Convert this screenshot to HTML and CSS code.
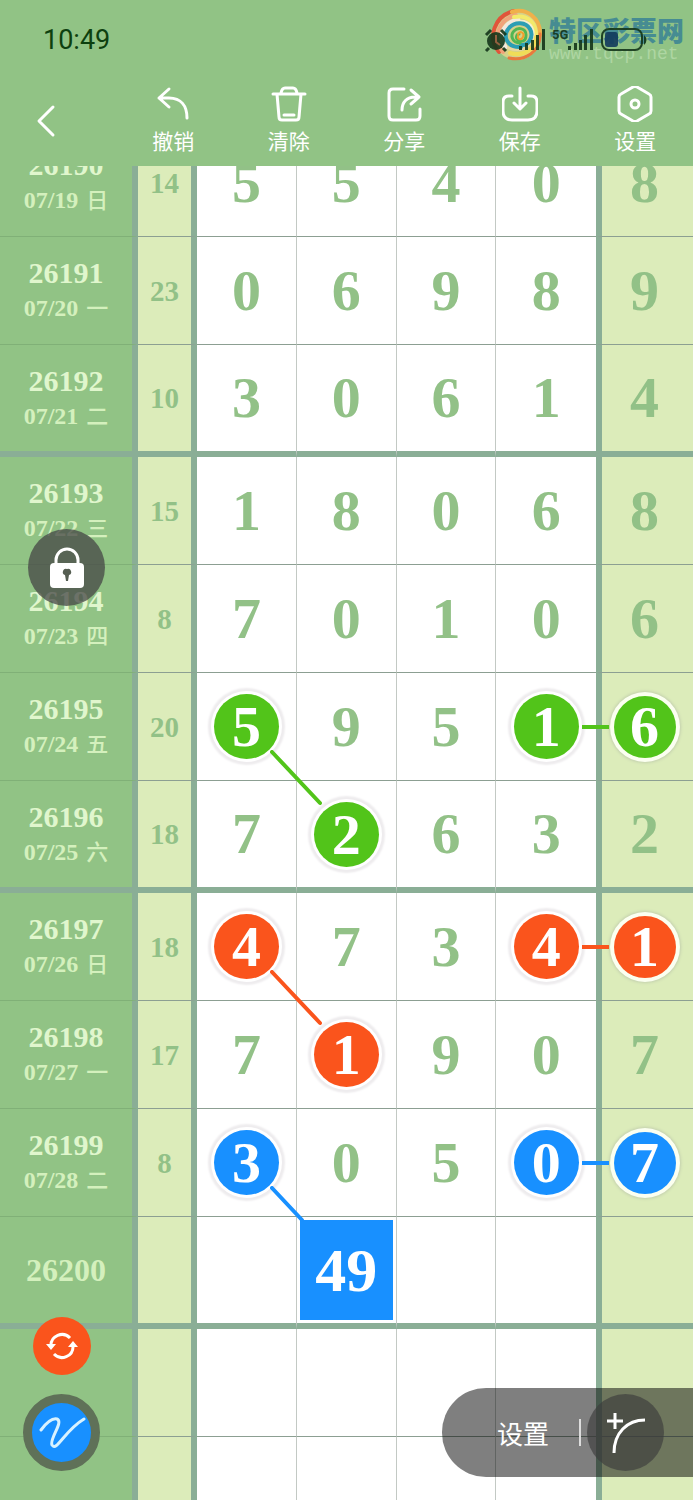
FILE: index.html
```html
<!DOCTYPE html>
<html lang="zh-CN">
<head>
    <meta charset="UTF-8">
    <meta name="viewport" content="width=device-width, initial-scale=1.0">
    <title>走势图</title>
    <link rel="stylesheet" href="styles.css">
</head>
<body>
<div class="app">
    <header>
        <div class="status-bar">
            <span class="clock">10:49</span>
            <div class="watermark">
                <svg viewBox="0 0 54 54" width="54" height="54" fill="none" stroke-linecap="round">
                    <ellipse cx="27" cy="27" rx="24" ry="25" fill="#e6d58c" opacity="0.8"/>
                    <path d="M9 44C-3 30 4 8 24 3" stroke="#e0553a" stroke-width="4"/>
                    <path d="M13 44C2 31 8 12 26 7" stroke="#f0a37a" stroke-width="4"/>
                    <path d="M15 39C8 29 13 15 28 12" stroke="#f3e8dc" stroke-width="5"/>
                    <path d="M22 4C36-1 51 10 50 27" stroke="#f0b04a" stroke-width="4"/>
                    <path d="M24 9C38 6 47 15 46 30" stroke="#f3ea6a" stroke-width="4"/>
                    <path d="M28 14c10-2 17 6 14 17" stroke="#f6efcf" stroke-width="4"/>
                    <path d="M50 26c1 16-14 28-31 24" stroke="#e8793e" stroke-width="3"/>
                    <path d="M46 29c0 12-12 20-26 16" stroke="#f0dd58" stroke-width="4"/>
                    <path d="M42 30c-2 10-12 14-23 10" stroke="#ead7a0" stroke-width="3"/>
                    <path d="M31 39c-14 1-19-11-12-19 6-7 17-6 21 1s-1 17-9 16" stroke="#2c9eb4" stroke-width="4"/>
                    <path d="M30 35c-8 0-10-8-6-12s12-3 12 4-5 7-8 5-1-6 1-6" stroke="#52b653" stroke-width="3"/>
                    <path d="M28 26c2-4 7-1 5 3s-6 2-5-1" stroke="#f0a02c" stroke-width="2"/>
                </svg>
                <div class="watermark-text">
                    <b>特区彩票网</b>
                    <span>www.tqcp.net</span>
                </div>
            </div>
            <svg class="status-icons" viewBox="0 0 165 30" width="165" height="30">
                <g fill="#14361a">
                    <circle cx="13" cy="16" r="9"/>
                    <path d="M3 10l5-5M23 10l-5-5M6 23l-3 3M20 23l3 3" stroke="#14361a" stroke-width="3"/>
                    <path d="M13 10v7l4 3" stroke="#8a5a3a" stroke-width="2" fill="none"/>
                    <path d="M36 21h3v4h-3zM42 18h3v7h-3zM48 15h3v10h-3zM53 10h3v15h-3zM59 4h3v21h-3z"/>
                    <path d="M85 21h3v4h-3zM91 18h3v7h-3zM96 15h3v10h-3zM101 10h3v15h-3zM107 4h3v21h-3z"/>
                    <text x="69" y="14" font-family="Roboto, sans-serif" font-size="13" font-weight="700">5G</text>
                    <rect x="122" y="7" width="13" height="15" rx="3" fill="#123a5c"/>
                    <rect x="119" y="4" width="40" height="21" rx="7" fill="none" stroke="#14361a" stroke-width="2"/>
                    <path d="M161 10q5 5 0 10z"/>
                </g>
            </svg>
        </div>
        <nav class="toolbar">
            <button class="back" aria-label="返回">
                <svg viewBox="0 0 20 34" width="20" height="34"><path d="M17 3L3 17l14 14"/></svg>
            </button>
            <button>
                <svg viewBox="0 0 36 36" width="36" height="36"><path d="M14 3L4 12l10 9M4 12h10c12 0 18 8 18 20"/></svg>
                撤销
            </button>
            <button>
                <svg viewBox="0 0 36 36" width="36" height="36"><path d="M2 8h32M6 8l2 23q0 3 3 3h14q3 0 3-3l2-23M10 7q1-5 4-5h8q3 0 4 5M13 29h10"/></svg>
                清除
            </button>
            <button>
                <svg viewBox="0 0 36 36" width="36" height="36"><path d="M18 3H7q-4 0-4 4v23q0 4 4 4h23q4 0 4-4v-7M25 4l8 7-8 7M33 11h-4c-8 0-13 5-13 13"/></svg>
                分享
            </button>
            <button>
                <svg viewBox="0 0 36 36" width="36" height="36"><path d="M10 10H7q-6 0-6 6v9q0 9 9 9h16q9 0 9-9v-9q0-6-6-6h-3M18 2v20M12 17l6 6 6-6"/></svg>
                保存
            </button>
            <button>
                <svg viewBox="0 0 36 36" width="36" height="36"><path d="M16 1q2-1 4 0l12 7q2 1 2 3v14q0 2-2 3l-12 7q-2 1-4 0L4 28q-2-1-2-3V11q0-2 2-3z"/><circle cx="18" cy="18" r="4"/></svg>
                设置
            </button>
        </nav>
    </header>

    <main class="board">
        <table class="chart">
            <colgroup>
                <col class="col-issue"><col class="col-sum"><col><col><col><col><col class="col-last">
            </colgroup>
            <tbody>
                <tr><th scope="row">26190<small>07/19 <i>日</i></small></th><td class="sum">14</td><td>5</td><td>5</td><td>4</td><td>0</td><td class="last">8</td></tr>
                <tr><th scope="row">26191<small>07/20 <i>一</i></small></th><td class="sum">23</td><td>0</td><td>6</td><td>9</td><td>8</td><td class="last">9</td></tr>
                <tr class="group-end"><th scope="row">26192<small>07/21 <i>二</i></small></th><td class="sum">10</td><td>3</td><td>0</td><td>6</td><td>1</td><td class="last">4</td></tr>

                <tr><th scope="row">26193<small>07/22 <i>三</i></small></th><td class="sum">15</td><td>1</td><td>8</td><td>0</td><td>6</td><td class="last">8</td></tr>
                <tr><th scope="row">26194<small>07/23 <i>四</i></small></th><td class="sum">8</td><td>7</td><td>0</td><td>1</td><td>0</td><td class="last">6</td></tr>
                <tr class="green">
                    <th scope="row">26195<small>07/24 <i>五</i></small></th><td class="sum">20</td>
                    <td><span class="ball">5</span><svg class="link-down" viewBox="0 0 52 56"><path d="M2 2l48 51"/></svg></td>
                    <td>9</td><td>5</td>
                    <td><span class="ball">1</span><span class="link-side"></span></td>
                    <td class="last"><span class="ball">6</span></td>
                </tr>
                <tr class="group-end green"><th scope="row">26196<small>07/25 <i>六</i></small></th><td class="sum">18</td><td>7</td><td><span class="ball">2</span></td><td>6</td><td>3</td><td class="last">2</td></tr>

                <tr class="orange">
                    <th scope="row">26197<small>07/26 <i>日</i></small></th><td class="sum">18</td>
                    <td><span class="ball">4</span><svg class="link-down" viewBox="0 0 52 56"><path d="M2 2l48 51"/></svg></td>
                    <td>7</td><td>3</td>
                    <td><span class="ball">4</span><span class="link-side"></span></td>
                    <td class="last"><span class="ball">1</span></td>
                </tr>
                <tr class="orange"><th scope="row">26198<small>07/27 <i>一</i></small></th><td class="sum">17</td><td>7</td><td><span class="ball">1</span></td><td>9</td><td>0</td><td class="last">7</td></tr>
                <tr class="blue">
                    <th scope="row">26199<small>07/28 <i>二</i></small></th><td class="sum">8</td>
                    <td><span class="ball">3</span><svg class="link-down" viewBox="0 0 52 56"><path d="M2 2l30 32"/></svg></td>
                    <td>0</td><td>5</td>
                    <td><span class="ball">0</span><span class="link-side"></span></td>
                    <td class="last"><span class="ball">7</span></td>
                </tr>
                <tr class="group-end blue"><th scope="row" class="next">26200</th><td class="sum"></td><td></td><td><span class="pick">49</span></td><td></td><td></td><td class="last"></td></tr>

                <tr><th></th><td class="sum"></td><td></td><td></td><td></td><td></td><td class="last"></td></tr>
                <tr><th></th><td class="sum"></td><td></td><td></td><td></td><td></td><td class="last"></td></tr>
            </tbody>
        </table>
    </main>

    <button class="lock" aria-label="锁定">
        <svg viewBox="0 0 36 42" width="36" height="42">
            <path d="M7 18v-5a11 11 0 0 1 22 0v5" fill="none" stroke="#fff" stroke-width="3"/>
            <rect x="1" y="16" width="34" height="25" rx="4" fill="#fff"/>
            <path d="M18 22a3 3 0 0 1 2 6l-1 6h-2l-1-6a3 3 0 0 1 2-6z" fill="#555e52"/>
        </svg>
    </button>
    <div class="float-tools">
        <button class="refresh" aria-label="刷新">
            <svg viewBox="0 0 32 28" width="32" height="28">
                <path d="M5 14A11 11 0 0 1 24 6M27 14A11 11 0 0 1 8 22" fill="none" stroke="#fff" stroke-width="3"/>
                <path d="M0 12h10l-5 6zM22 15h10l-5-6z" fill="#fff"/>
            </svg>
        </button>
        <button class="pen" aria-label="画笔">
            <svg viewBox="0 0 48 34" width="48" height="34">
                <path d="M3 14C9 6 15 2 19 3c7 3-8 20-5 26 5 7 12-14 32-26" fill="none" stroke="#d8f2ff" stroke-width="3" stroke-linecap="round"/>
            </svg>
        </button>
    </div>
    <div class="bottom-bar">
        <button class="settings">设置</button>
        <button class="curve" aria-label="添加曲线">
            <svg viewBox="0 0 40 42" width="40" height="42" fill="none" stroke="#fff" stroke-width="3">
                <path d="M9 1v16M1 9h16M39 8C21 8 8 21 8 41"/>
            </svg>
        </button>
    </div>
</div>
</body>
</html>
```
FILE: styles.css
```css
* {
    box-sizing: border-box;
}

body {
    margin: 0;
    font-family: "Noto Sans CJK SC", sans-serif;
    background-color: #91c385;
}

button {
    padding: 0;
    border: none;
    background: none;
    color: #fff;
    font-family: inherit;
    cursor: pointer;
}

.app {
    position: relative;
    display: flex;
    flex-direction: column;
    height: 100vh;
    overflow: hidden;
}

/* Header */
header {
    background-color: #91c385;
}

.status-bar {
    position: relative;
    display: flex;
    justify-content: space-between;
    align-items: center;
    height: 80px;
    padding: 0 45px 0 43px;
}

.clock {
    font-family: Roboto, sans-serif;
    font-size: 27px;
    color: #0d400f;
}

.status-icons {
    position: relative;
    opacity: 0.9;
}

.watermark {
    position: absolute;
    top: 8px;
    right: 9px;
    display: flex;
    gap: 5px;
}

.watermark-text {
    display: flex;
    flex-direction: column;
    padding-top: 7px;
}

.watermark b {
    font-size: 27px;
    font-weight: 900;
    line-height: 30px;
    color: #468c92;
}

.watermark span {
    font-family: "Liberation Mono", monospace;
    font-size: 18px;
    line-height: 18px;
    color: #aed6a2;
}

.toolbar {
    display: grid;
    grid-template-columns: repeat(6, 1fr);
    height: 86px;
}

.toolbar button {
    display: flex;
    flex-direction: column;
    align-items: center;
    gap: 3px;
    padding-top: 6px;
    font-size: 21px;
    line-height: 30px;
}

.toolbar svg {
    fill: none;
    stroke: #fff;
    stroke-width: 3;
    stroke-linecap: round;
    stroke-linejoin: round;
}

.toolbar .back {
    align-items: flex-start;
    padding: 24px 0 0 36px;
}

/* Chart, scrolled part of a row under the header */
.board {
    flex: 1;
    overflow: hidden;
}

.chart {
    width: 100%;
    margin-top: -37px;
    table-layout: fixed;
    border-collapse: separate;
    border-spacing: 0;
    font-family: "Liberation Serif", "Noto Sans CJK SC", serif;
    font-weight: bold;
}

.col-issue {
    width: 138px;
}

.col-sum {
    width: 59px;
}

.col-last {
    width: 97px;
}

.chart th,
.chart td {
    position: relative;
    height: 108px;
    padding: 0;
    text-align: center;
    vertical-align: middle;
    border-bottom: 1px solid #8c9f92;
}

.chart td {
    background-color: #fff;
    border-right: 1px solid #c3c9c4;
    color: #92c187;
    font-size: 58px;
    line-height: 60px;
}

.chart th {
    background-color: #91c385;
    border-right: 6px solid #8aae96;
    border-bottom-color: #80b077;
    color: #e0f6cd;
    font-size: 30px;
    line-height: 36px;
}

.chart small {
    display: block;
    font-size: 24px;
    line-height: 35px;
    color: #d4f0bd;
}

.chart small i {
    font-size: 22px;
    font-style: normal;
    font-weight: 500;
    font-family: "Noto Sans CJK SC", sans-serif;
    line-height: 1;
    margin-left: 2px;
}

.chart .next {
    font-size: 32px;
    color: #d4f0bd;
}

.chart .sum {
    background-color: #dcecba;
    border-right: 6px solid #8aae96;
    font-size: 29px;
}

.chart td:nth-child(6) {
    border-right: none;
}

.chart .last {
    padding-right: 6px;
    background-color: #dcecba;
    border-left: 6px solid #8aae96;
    border-right: none;
}

.chart .group-end th,
.chart .group-end td {
    height: 112px;
    border-bottom: 6px solid #8aae96;
}

/* Marked numbers */
.green {
    --mark: #52c41a;
}

.orange {
    --mark: #fa541c;
}

.blue {
    --mark: #1890ff;
}

.ball {
    display: block;
    width: 65px;
    height: 65px;
    margin: 0 auto;
    border-radius: 50%;
    background-color: var(--mark);
    box-shadow: 0 0 0 3px #fff, 0 0 2px 6px #eeecee;
    color: #fff;
    line-height: 65px;
}

.last .ball {
    width: 62px;
    height: 62px;
    line-height: 62px;
    box-shadow: 0 0 0 4px #fbfff0, 0 0 3px 5px #c3cfae;
}

.pick {
    position: absolute;
    inset: 3px;
    display: flex;
    justify-content: center;
    align-items: center;
    background-color: var(--mark);
    color: #fff;
    font-size: 62px;
}

.link-down {
    position: absolute;
    z-index: 1;
    top: 77px;
    left: 74%;
    width: 52px;
    height: 56px;
    stroke: var(--mark);
    stroke-width: 4;
    stroke-linecap: round;
}

.link-side {
    position: absolute;
    z-index: 1;
    top: 50%;
    right: -13px;
    width: 27px;
    height: 4px;
    margin-top: -2px;
    background-color: var(--mark);
}

/* Floating controls */
.lock {
    position: absolute;
    z-index: 2;
    top: 529px;
    left: 28px;
    display: flex;
    justify-content: center;
    align-items: center;
    width: 77px;
    height: 77px;
    border-radius: 50%;
    background-color: rgba(70, 70, 70, 0.75);
}

.float-tools {
    position: absolute;
    z-index: 2;
    bottom: 29px;
    left: 23px;
    display: flex;
    flex-direction: column;
    align-items: center;
    gap: 19px;
}

.float-tools button {
    display: flex;
    justify-content: center;
    align-items: center;
    border-radius: 50%;
}

.refresh {
    width: 58px;
    height: 58px;
    background-color: #fa541c;
}

.pen {
    width: 77px;
    height: 77px;
    border: 9px solid #5f7158;
    background-color: #1890ff;
}

.bottom-bar {
    position: absolute;
    z-index: 2;
    right: 0;
    bottom: 23px;
    display: flex;
    align-items: center;
    height: 89px;
    padding: 0 29px 0 55px;
    border-radius: 44px 0 0 44px;
    background-color: rgba(0, 0, 0, 0.5);
}

.settings {
    padding-right: 30px;
    border-right: 2px solid #ddd;
    font-size: 26px;
    line-height: 27px;
}

.curve {
    display: flex;
    justify-content: center;
    align-items: center;
    width: 77px;
    height: 77px;
    margin-left: 6px;
    border-radius: 50%;
    background-color: rgba(60, 60, 60, 0.65);
}
```
